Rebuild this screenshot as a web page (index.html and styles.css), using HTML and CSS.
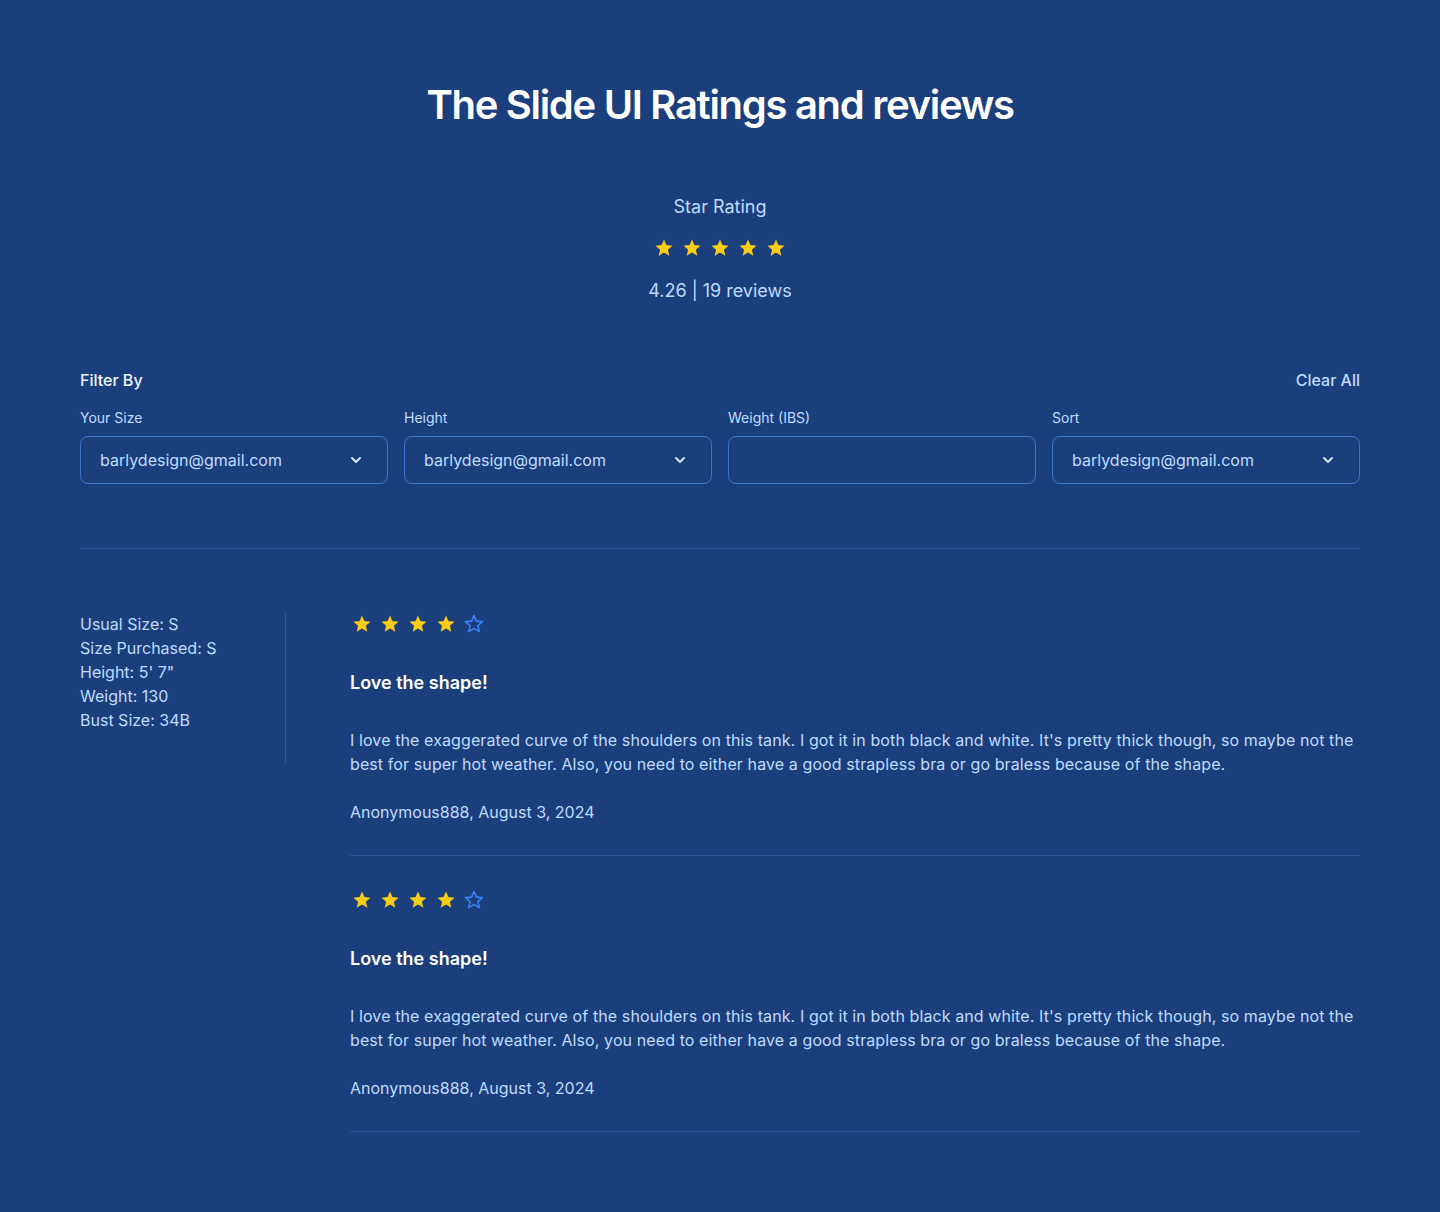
FILE: index.html
```html
<!DOCTYPE html>
<html lang="en">
<head>
<meta charset="utf-8">
<title>The Slide UI Ratings and reviews</title>
<link rel="stylesheet" href="styles.css">
</head>
<body>
<svg width="0" height="0" class="defs" aria-hidden="true">
  <defs>
    <path id="star" d="M12 17.27L18.18 21l-1.64-7.03L22 9.24l-7.19-.61L12 2 9.19 8.63 2 9.24l5.46 4.73L5.82 21z"/>
  </defs>
</svg>
<main class="page">
  <h1 class="title">The Slide UI Ratings and reviews</h1>

  <section class="summary">
    <div class="summary-label">Star Rating</div>
    <div class="stars">
      <svg class="star full" viewBox="-2 -2 28 28"><use href="#star"/></svg>
      <svg class="star full" viewBox="-2 -2 28 28"><use href="#star"/></svg>
      <svg class="star full" viewBox="-2 -2 28 28"><use href="#star"/></svg>
      <svg class="star full" viewBox="-2 -2 28 28"><use href="#star"/></svg>
      <svg class="star full" viewBox="-2 -2 28 28"><use href="#star"/></svg>
    </div>
    <div class="summary-count">4.26 | 19 reviews</div>
  </section>

  <section class="filters">
    <div class="filters-head">
      <span class="filters-title">Filter By</span>
      <span class="clear">Clear All</span>
    </div>
    <div class="filters-grid">
      <div class="field">
        <label class="field-label">Your Size</label>
        <div class="select">
          <span>barlydesign@gmail.com</span>
          <svg class="chev" viewBox="0 0 16 16"><path d="M4 6l4 4 4-4"/></svg>
        </div>
      </div>
      <div class="field">
        <label class="field-label">Height</label>
        <div class="select">
          <span>barlydesign@gmail.com</span>
          <svg class="chev" viewBox="0 0 16 16"><path d="M4 6l4 4 4-4"/></svg>
        </div>
      </div>
      <div class="field">
        <label class="field-label">Weight (IBS)</label>
        <div class="select"></div>
      </div>
      <div class="field">
        <label class="field-label">Sort</label>
        <div class="select">
          <span>barlydesign@gmail.com</span>
          <svg class="chev" viewBox="0 0 16 16"><path d="M4 6l4 4 4-4"/></svg>
        </div>
      </div>
    </div>
  </section>

  <hr class="divider">

  <section class="reviews">
    <aside class="profile">
      <div>Usual Size: S</div>
      <div>Size Purchased: S</div>
      <div>Height: 5' 7"</div>
      <div>Weight: 130</div>
      <div>Bust Size: 34B</div>
    </aside>
    <div class="review-list">
      <article class="review">
        <div class="stars left">
          <svg class="star full" viewBox="-2 -2 28 28"><use href="#star"/></svg>
          <svg class="star full" viewBox="-2 -2 28 28"><use href="#star"/></svg>
          <svg class="star full" viewBox="-2 -2 28 28"><use href="#star"/></svg>
          <svg class="star full" viewBox="-2 -2 28 28"><use href="#star"/></svg>
          <svg class="star empty" viewBox="-2 -2 28 28"><use href="#star"/></svg>
        </div>
        <h3 class="review-title">Love the shape!</h3>
        <p class="review-body">I love the exaggerated curve of the shoulders on this tank. I got it in both black and white. It's pretty thick though, so maybe not the best for super hot weather. Also, you need to either have a good strapless bra or go braless because of the shape.</p>
        <div class="review-meta">Anonymous888, August 3, 2024</div>
      </article>
      <article class="review">
        <div class="stars left">
          <svg class="star full" viewBox="-2 -2 28 28"><use href="#star"/></svg>
          <svg class="star full" viewBox="-2 -2 28 28"><use href="#star"/></svg>
          <svg class="star full" viewBox="-2 -2 28 28"><use href="#star"/></svg>
          <svg class="star full" viewBox="-2 -2 28 28"><use href="#star"/></svg>
          <svg class="star empty" viewBox="-2 -2 28 28"><use href="#star"/></svg>
        </div>
        <h3 class="review-title">Love the shape!</h3>
        <p class="review-body">I love the exaggerated curve of the shoulders on this tank. I got it in both black and white. It's pretty thick though, so maybe not the best for super hot weather. Also, you need to either have a good strapless bra or go braless because of the shape.</p>
        <div class="review-meta">Anonymous888, August 3, 2024</div>
      </article>
    </div>
  </section>
</main>
</body>
</html>
```

FILE: styles.css
```css
* { box-sizing: border-box; }

html, body {
  margin: 0;
  padding: 0;
  background: #1b3f7c;
}

body {
  font-family: Inter, "Noto Sans", "Liberation Sans", sans-serif;
  color: #bfdbfe;
  min-height: 1212px;
}

.defs { position: absolute; width: 0; height: 0; overflow: hidden; }

.page {
  width: 1280px;
  margin: 0 auto;
  padding: 81px 0 80px;
}

.title {
  margin: 0;
  text-align: center;
  font-size: 40px;
  line-height: 48px;
  font-weight: 600;
  letter-spacing: -1.3px;
  color: #ffffff;
}

.summary {
  margin-top: 64px;
  display: flex;
  flex-direction: column;
  align-items: center;
}

.summary-label {
  font-size: 18px;
  line-height: 28px;
  color: #bfdbfe;
}

.stars {
  display: flex;
  gap: 4px;
  height: 22px;
  align-items: center;
}

.summary .stars { margin-top: 16px; }

.star {
  width: 24px;
  height: 24px;
  flex: none;
}

.star.full { fill: #facc15; }

.star.empty {
  fill: none;
  stroke: #3b82f6;
  stroke-width: 1.8;
  stroke-linejoin: round;
}

.summary-count {
  margin-top: 18px;
  font-size: 18px;
  line-height: 28px;
  color: #bfdbfe;
}

.filters { margin-top: 63px; }

.filters-head {
  display: flex;
  justify-content: space-between;
  align-items: center;
  font-size: 16px;
  line-height: 24px;
}

.filters-title {
  font-weight: 500;
  color: #eff6ff;
}

.clear {
  color: #bfdbfe;
  font-weight: 500;
}

.filters-grid {
  margin-top: 16px;
  display: grid;
  grid-template-columns: repeat(4, 1fr);
  gap: 16px;
}

.field {
  display: flex;
  flex-direction: column;
  gap: 8px;
}

.field-label {
  font-size: 14px;
  line-height: 20px;
  color: #bfdbfe;
}

.select {
  height: 48px;
  border: 1px solid #3c74cf;
  border-radius: 8px;
  padding: 0 23px 0 19px;
  display: flex;
  align-items: center;
  justify-content: space-between;
  font-size: 16px;
  color: #bfdbfe;
}

.chev {
  width: 16px;
  height: 16px;
  fill: none;
  stroke: #dbeafe;
  stroke-width: 1.8;
  stroke-linecap: round;
  stroke-linejoin: round;
}

.divider {
  margin: 64px 0 0;
  border: 0;
  border-top: 1px solid #2b5598;
  height: 0;
}

.reviews {
  margin-top: 63px;
  display: flex;
  align-items: flex-start;
}

.profile {
  width: 206px;
  flex: none;
  border-right: 1px solid #2b5598;
  padding-bottom: 32px;
  font-size: 16px;
  line-height: 24px;
  color: #bfdbfe;
}

.review-list {
  flex: 1;
  padding-left: 64px;
}

.review {
  padding: 32px 0 31px;
  border-bottom: 1px solid #2b5598;
}

.review:first-child { padding-top: 0; }

.stars.left { height: 24px; }

.review-title {
  margin: 33px 0 0;
  font-size: 18px;
  line-height: 28px;
  font-weight: 600;
  color: #ffffff;
}

.review-body {
  margin: 31px 0 0;
  font-size: 16px;
  line-height: 24px;
  letter-spacing: 0.1px;
  color: #bfdbfe;
}

.review-meta {
  margin-top: 24px;
  font-size: 16px;
  line-height: 24px;
  color: #bfdbfe;
}
```
